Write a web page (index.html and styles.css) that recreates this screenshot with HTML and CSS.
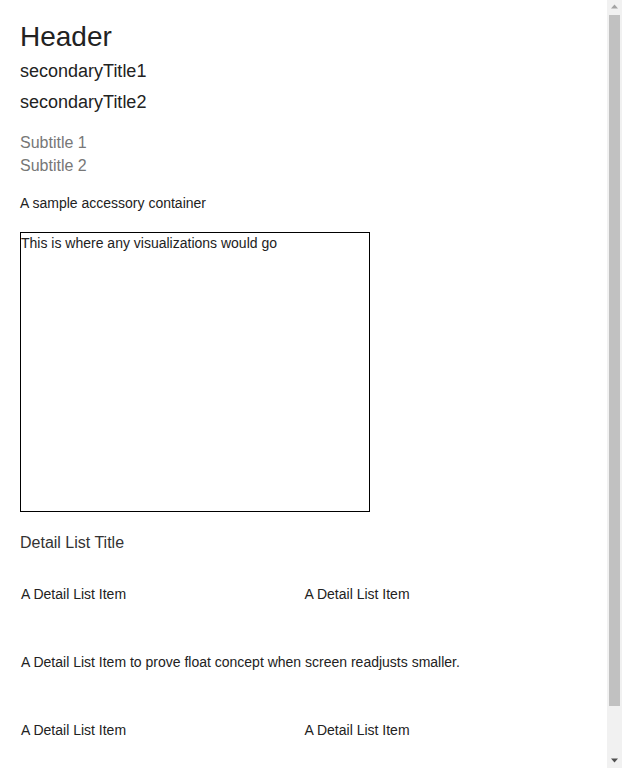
FILE: index.html
```html
<!DOCTYPE html>
<html>
<head>
<meta charset="utf-8">
<link rel="stylesheet" href="styles.css">
</head>
<body>
<div class="page">
  <h1 class="header">Header</h1>
  <h2 class="secondary">secondaryTitle1</h2>
  <h2 class="secondary">secondaryTitle2</h2>
  <div class="subtitles">
    <div class="subtitle">Subtitle 1</div>
    <div class="subtitle">Subtitle 2</div>
  </div>
  <div class="accessory">A sample accessory container</div>
  <div class="viz">This is where any visualizations would go</div>
  <h3 class="detail-title">Detail List Title</h3>
  <div class="detail-list">
    <div class="detail-item">A Detail List Item</div>
    <div class="detail-item">A Detail List Item</div>
    <div class="detail-item full">A Detail List Item to prove float concept when screen readjusts smaller.</div>
    <div class="detail-item">A Detail List Item</div>
    <div class="detail-item">A Detail List Item</div>
  </div>
</div>
<div class="scrollbar" aria-hidden="true">
  <svg class="arrow up" width="15" height="14" viewBox="0 0 15 14"><polygon points="4,8.5 11,8.5 7.5,4.5" fill="#a3a3a3"/></svg>
  <div class="thumb"></div>
  <svg class="arrow down" width="15" height="14" viewBox="0 0 15 14"><polygon points="4,4.5 11,4.5 7.5,8.5" fill="#505050"/></svg>
</div>
</body>
</html>
```
FILE: styles.css
```css
html, body {
  margin: 0;
  padding: 0;
  background: #fff;
  font-family: "Liberation Sans", Arial, sans-serif;
  color: #222;
}
.page {
  width: 567px;
  padding: 21px 20px 40px;
}
.header {
  margin: 0;
  font-size: 28px;
  font-weight: normal;
  line-height: 32px;
  color: #222;
}
.secondary {
  margin: 0;
  font-size: 18px;
  font-weight: normal;
  line-height: 31px;
  color: #222;
}
.secondary:first-of-type {
  margin-top: 3px;
}
.subtitles {
  margin-top: 13px;
}
.subtitle {
  font-size: 16px;
  line-height: 23px;
  color: #777;
}
.accessory {
  margin-top: 15px;
  font-size: 14px;
  line-height: 22px;
  color: #222;
}
.viz {
  margin-top: 18px;
  width: 348px;
  height: 278px;
  border: 1px solid #000;
  font-size: 14px;
  line-height: 20px;
  color: #222;
}
.detail-title {
  margin: 21px 0 0;
  font-size: 16px;
  font-weight: normal;
  line-height: 20px;
  color: #333;
}
.detail-list {
  display: grid;
  grid-template-columns: 1fr 1fr;
  margin-top: 19px;
}
.detail-item {
  font-size: 14px;
  line-height: 20px;
  padding: 12px 1px 36px;
  color: #222;
}
.detail-item.full {
  grid-column: 1 / -1;
}

/* decorative browser scrollbar overlay */
.scrollbar {
  position: fixed;
  top: 0;
  right: 0;
  width: 15px;
  height: 100vh;
  background: #f1f1f1;
  display: flex;
  flex-direction: column;
  align-items: center;
}
.scrollbar .arrow {
  display: block;
  flex: none;
}
.scrollbar .thumb {
  width: 11px;
  height: 691px;
  margin: 1px 0 auto;
  background: #c1c1c1;
}
```
